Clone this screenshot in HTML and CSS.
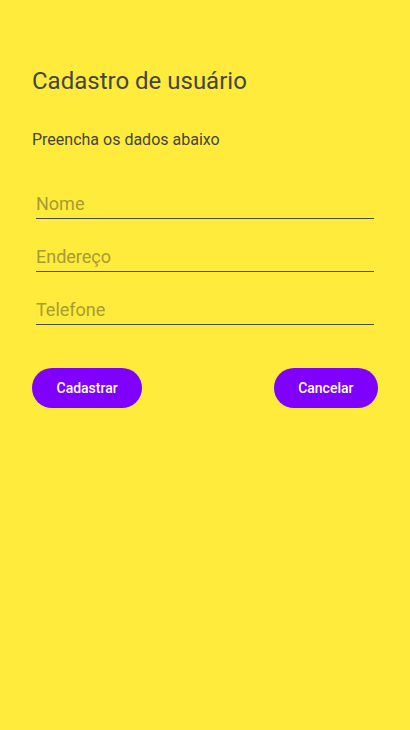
FILE: index.html
```html
<!DOCTYPE html>
<html lang="pt">
<head>
<meta charset="utf-8">
<title>Cadastro de usuário</title>
<link rel="stylesheet" href="styles.css">
</head>
<body>
<main class="screen">
  <h1 class="title">Cadastro de usuário</h1>
  <p class="subtitle">Preencha os dados abaixo</p>
  <form class="form">
    <label class="field"><input class="input" type="text" placeholder="Nome"></label>
    <label class="field"><input class="input" type="text" placeholder="Endereço"></label>
    <label class="field"><input class="input" type="text" placeholder="Telefone"></label>
    <div class="actions">
      <button type="button" class="btn">Cadastrar</button>
      <button type="button" class="btn">Cancelar</button>
    </div>
  </form>
</main>
</body>
</html>
```

FILE: styles.css
```css
html, body {
  margin: 0;
  padding: 0;
  height: 100%;
  background: #FFEB3B;
}
body {
  font-family: Roboto, "Liberation Sans", sans-serif;
}
.screen {
  padding: 67px 32px 0 32px;
  box-sizing: border-box;
  display: flex;
  flex-direction: column;
}
.title {
  margin: 0;
  font-size: 24px;
  line-height: 28px;
  font-weight: 400;
  color: #454545;
}
.subtitle {
  margin: 35px 0 0 0;
  font-size: 16px;
  line-height: 19px;
  color: #454545;
}
.form {
  margin-top: 44px;
  display: flex;
  flex-direction: column;
  gap: 27px;
}
.field {
  display: block;
  margin: 0 4px;
  border-bottom: 1px solid #4a4a4a;
  padding-bottom: 4px;
}
.input {
  display: block;
  width: 100%;
  box-sizing: border-box;
  border: 0;
  outline: 0;
  padding: 0;
  margin: 0;
  background: transparent;
  font-family: Roboto, "Liberation Sans", sans-serif;
  font-size: 18px;
  line-height: 21px;
  height: 21px;
  color: #333;
}
.input::placeholder {
  color: #A89B32;
  opacity: 1;
}
.actions {
  margin-top: 16px;
  display: flex;
  justify-content: space-between;
}
.btn {
  height: 40px;
  border: 0;
  border-radius: 20px;
  background: #7F00FF;
  color: #fff;
  font-family: Roboto, "Liberation Sans", sans-serif;
  font-size: 14px;
  font-weight: 500;
  padding: 0 24.5px;
  cursor: pointer;
}
```
